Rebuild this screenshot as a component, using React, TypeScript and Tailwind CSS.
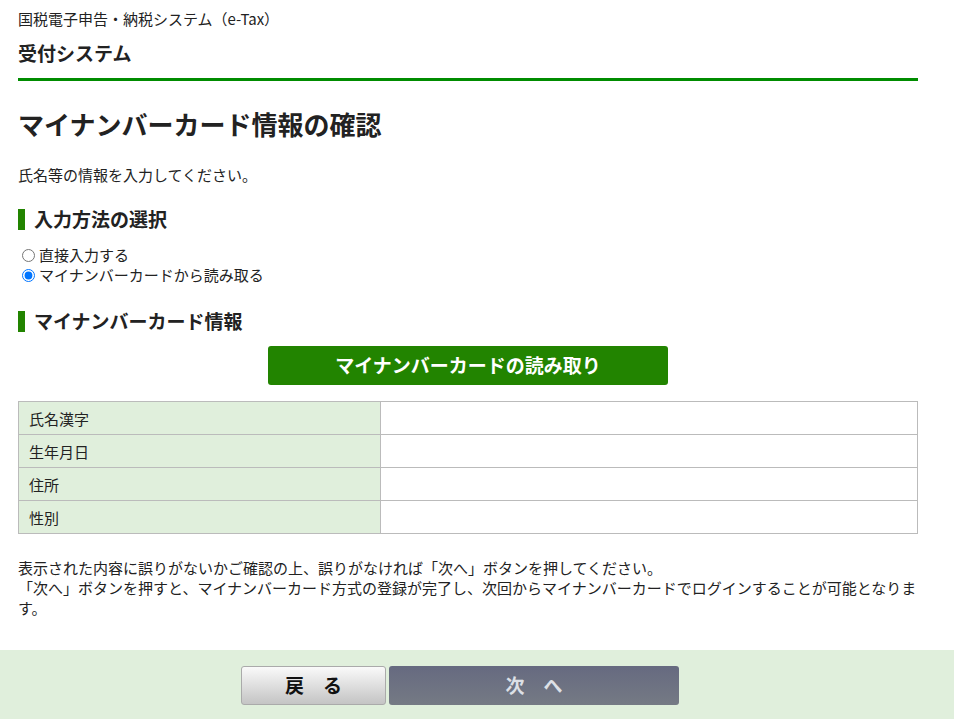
export default function App() {
  const rows = ['氏名漢字', '生年月日', '住所', '性別'];
  return (
    <div className="min-h-screen bg-white text-[#222] font-['Noto_Sans_CJK_JP','Noto_Sans',sans-serif] flex flex-col">
      <div className="px-[18px] w-[936px]">
        {/* Header */}
        <div className="pt-[9px] text-[15px] leading-[20px]">国税電子申告・納税システム（e-Tax）</div>
        <div className="pt-[12px] pb-[13px] text-[19px] font-bold leading-[24px]">受付システム</div>
        <div className="h-[3px] bg-[#008c00]" />

        <h1 className="mt-[26px] text-[26px] font-bold leading-[34px]">マイナンバーカード情報の確認</h1>
        <p className="mt-[24px] text-[15px] leading-[20px]">氏名等の情報を入力してください。</p>

        <h2 className="mt-[22px] flex items-center gap-[9px] text-[19px] font-bold leading-[24px]">
          <span className="w-[7px] h-[21px] bg-[#228400]" />
          入力方法の選択
        </h2>
        <div className="mt-[14px] text-[15px] leading-[20px]">
          <label className="flex items-center gap-[4px]">
            <input type="radio" name="m" className="w-[13px] h-[13px] ml-[4px]" />
            直接入力する
          </label>
          <label className="flex items-center gap-[4px]">
            <input type="radio" name="m" defaultChecked className="w-[13px] h-[13px] ml-[4px]" />
            マイナンバーカードから読み取る
          </label>
        </div>

        <h2 className="mt-[24px] flex items-center gap-[9px] text-[19px] font-bold leading-[24px]">
          <span className="w-[7px] h-[21px] bg-[#228400]" />
          マイナンバーカード情報
        </h2>

        <div className="mt-[13px] flex justify-center">
          <button className="w-[400px] h-[39px] rounded-[3px] bg-[#228400] text-white text-[19px] font-bold">
            マイナンバーカードの読み取り
          </button>
        </div>

        <table className="mt-[16px] w-full border-collapse text-[15px]">
          <tbody>
            {rows.map((r) => (
              <tr key={r} className="h-[33px]">
                <td className="w-[362px] border border-[#bbbbbb] bg-[#e0efdc] px-[10px] pt-[2px]">{r}</td>
                <td className="border border-[#bbbbbb]" />
              </tr>
            ))}
          </tbody>
        </table>

        <div className="mt-[24px] text-[15px] leading-[20px]">
          <p>表示された内容に誤りがないかご確認の上、誤りがなければ「次へ」ボタンを押してください。</p>
          <p>「次へ」ボタンを押すと、マイナンバーカード方式の登録が完了し、次回からマイナンバーカードでログインすることが可能となります。</p>
        </div>
      </div>

      {/* Footer */}
      <div className="mt-[32px] bg-[#e0efdc] flex-1 flex justify-center gap-[3px] pt-[16px] pb-[14px] pr-[34px]">
        <button className="w-[145px] h-[39px] rounded-[3px] border border-[#aaaaaa] bg-gradient-to-b from-[#fafafa] to-[#c4c4c4] text-[19px] font-bold text-[#111]">
          戻　る
        </button>
        <button className="w-[290px] h-[39px] rounded-[3px] bg-gradient-to-b from-[#666a80] to-[#757a84] text-[19px] font-bold text-[#dde0e6]">
          次　へ
        </button>
      </div>
    </div>
  );
}
